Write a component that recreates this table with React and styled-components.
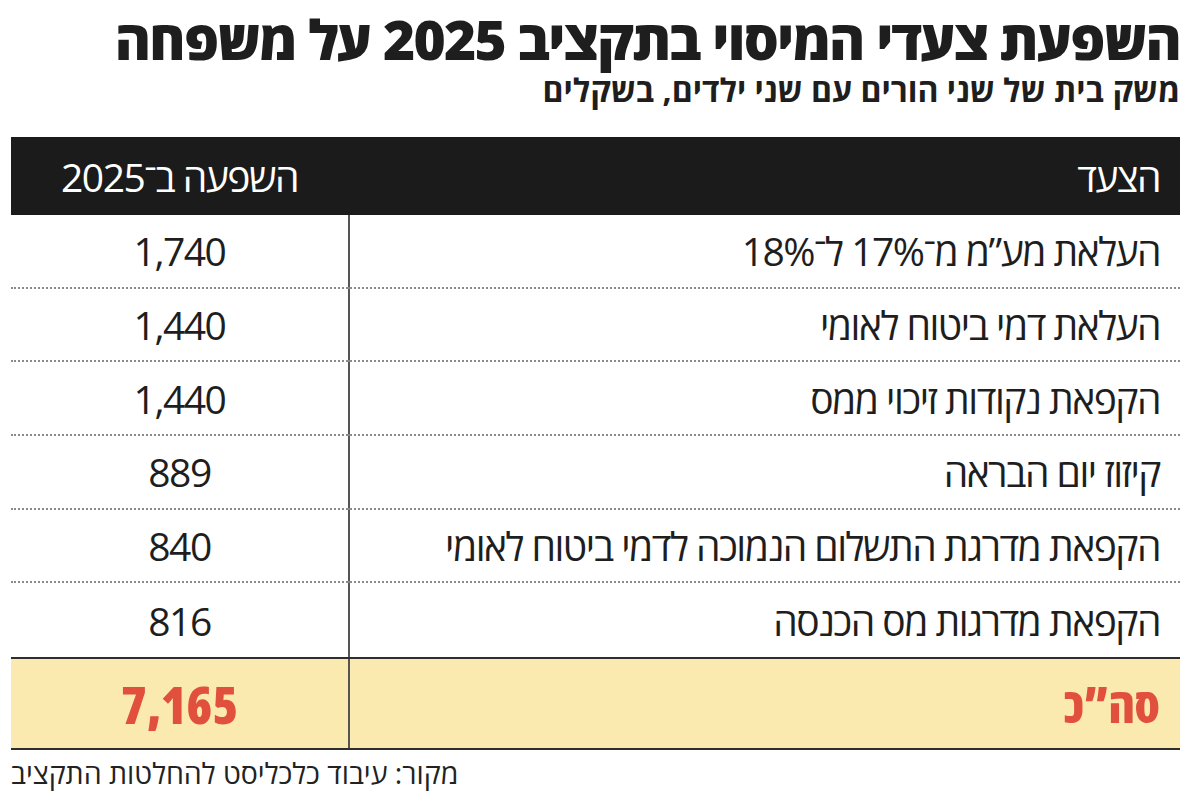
import React from "react";
import styled, { createGlobalStyle } from "styled-components";

const Global = createGlobalStyle`
  html, body { margin: 0; padding: 0; background: #ffffff; }
  body { font-family: "Open Sans", "DejaVu Sans", sans-serif; color: #1c1c1c; }
`;

const Page = styled.div`
  width: 1200px;
  height: 810px;
  box-sizing: border-box;
  padding: 9px 20px 0 11px;
  display: flex;
  flex-direction: column;
  background: #fff;
`;

const Title = styled.h1`
  margin: 0;
  font-family: "Open Sans", "DejaVu Sans", sans-serif;
  font-weight: 800;
  font-size: 55px;
  line-height: 60px;
  letter-spacing: -1.7px;
  color: #1e1e1e;
  text-align: right;
`;

const Subtitle = styled.h2`
  margin: 3px 0 0;
  font-family: "Open Sans", "DejaVu Sans", sans-serif;
  font-weight: 700;
  font-size: 32px;
  line-height: 36px;
  color: #1e1e1e;
  text-align: right;
`;

const Table = styled.div`
  margin-top: 29px;
  display: grid;
  grid-template-columns: minmax(0, 1fr) 2px 337px;
`;

const HeadCell = styled.div`
  background: #1b1b1b;
  color: #fff;
  height: 78px;
  display: flex;
  align-items: center;
  justify-content: ${(p) => (p.$value ? "center" : "flex-start")};
  padding: ${(p) => (p.$value ? "0" : "0 20px")};
  font-size: 39px;
  font-weight: 400;
  letter-spacing: -1.5px;
  font-family: "Open Sans", "DejaVu Sans", sans-serif;
`;

const Divider = styled.div`
  background: ${(p) => (p.$head ? "#bdbdbd" : "#555")};
  ${(p) => p.$head && "border-left: 0.5px solid #1b1b1b; border-right: 0.5px solid #1b1b1b;"}
`;

const Cell = styled.div`
  height: 73.7px;
  box-sizing: border-box;
  min-width: 0;
  display: flex;
  align-items: center;
  justify-content: ${(p) => (p.$value ? "center" : "flex-start")};
  padding: ${(p) => (p.$value ? "0" : "0 20px")};
  font-size: 39px;
  font-weight: 500;
  letter-spacing: -1.5px;
  white-space: nowrap;
  font-family: "Open Sans", "DejaVu Sans", sans-serif;
  color: #1e1e1e;
  border-bottom: ${(p) => (p.$last ? "none" : "2px dotted #8a8a8a")};
`;

const DivCell = styled.div`
  background: #555;
  border-bottom: ${(p) => (p.$last ? "none" : "2px dotted #8a8a8a")};
`;

const TotalCell = styled.div`
  height: 93px;
  box-sizing: border-box;
  background: #fbeab0;
  border-top: 2px solid #2e2e2e;
  border-bottom: 2px solid #2e2e2e;
  display: flex;
  align-items: center;
  justify-content: ${(p) => (p.$value ? "center" : "flex-start")};
  padding: ${(p) => (p.$value ? "0" : "0 20px")};
  font-size: ${(p) => (p.$value ? "52px" : "49px")};
  font-weight: 800;
  font-stretch: 85%;
  font-family: "Open Sans", "DejaVu Sans", sans-serif;
  color: #e0503c;
`;

const TotalDiv = styled.div`
  background: #555;
  border-top: 2px solid #2e2e2e;
  border-bottom: 2px solid #2e2e2e;
`;

const Source = styled.div`
  margin-top: 4px;
  text-align: left;
  font-size: 28.5px;
  font-weight: 400;
  font-family: "Open Sans", "DejaVu Sans", sans-serif;
  color: #222;
`;

const rows = [
  ["העלאת מע\u201Dמ מ־17% ל־18%", "1,740"],
  ["העלאת דמי ביטוח לאומי", "1,440"],
  ["הקפאת נקודות זיכוי ממס", "1,440"],
  ["קיזוז יום הבראה", "889"],
  ["הקפאת מדרגת התשלום הנמוכה לדמי ביטוח לאומי", "840"],
  ["הקפאת מדרגות מס הכנסה", "816"],
];

export default function App() {
  return (
    <Page dir="rtl">
      <Global />
      <Title>השפעת צעדי המיסוי בתקציב 2025 על משפחה</Title>
      <Subtitle>משק בית של שני הורים עם שני ילדים, בשקלים</Subtitle>
      <Table>
        <HeadCell>הצעד</HeadCell>
        <Divider $head />
        <HeadCell $value>השפעה ב־2025</HeadCell>
        {rows.map(([label, val], i) => {
          const last = i === rows.length - 1;
          return (
            <React.Fragment key={i}>
              <Cell $last={last}>{label}</Cell>
              <DivCell $last={last} />
              <Cell $value $last={last}>{val}</Cell>
            </React.Fragment>
          );
        })}
        <TotalCell>סה”כ</TotalCell>
        <TotalDiv />
        <TotalCell $value>7,165</TotalCell>
      </Table>
      <Source>מקור: עיבוד כלכליסט להחלטות התקציב</Source>
    </Page>
  );
}
